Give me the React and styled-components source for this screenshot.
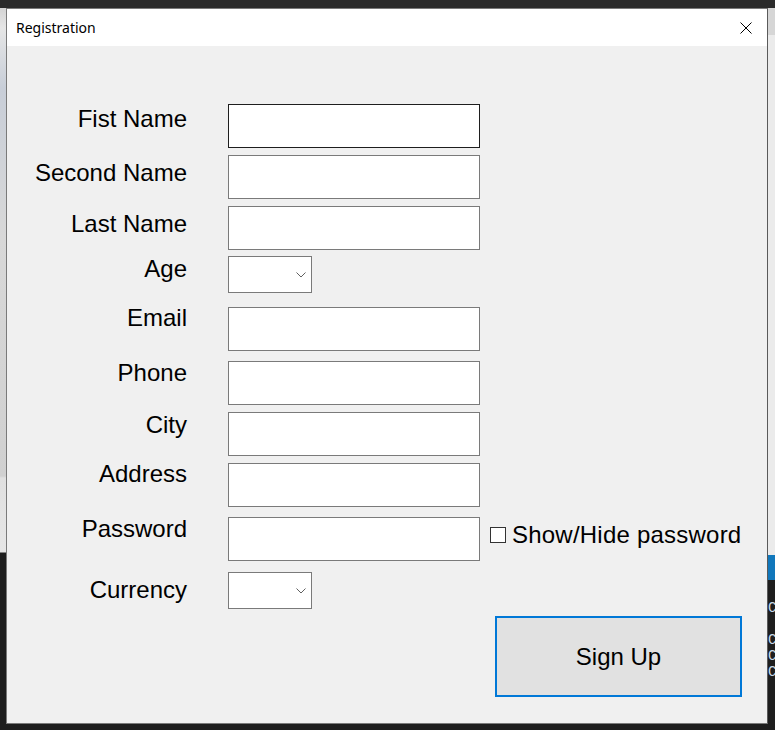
import React from 'react';
import styled, { createGlobalStyle } from 'styled-components';

const GlobalStyle = createGlobalStyle`
  html, body {
    margin: 0;
    padding: 0;
    background: #1e1e1e;
  }
  body {
    font-family: "Liberation Sans", Arial, sans-serif;
  }
`;

const Desktop = styled.div`
  width: 775px;
  height: 730px;
  overflow: hidden;
  display: grid;
  grid-template-columns: 6px 762px 7px;
  grid-template-rows: 8px 716px 6px;
  background: #1e1e1e;
`;

const TopStrip = styled.div`
  grid-column: 1 / 4;
  background: #2b2b2b;
`;

const BottomStrip = styled.div`
  grid-column: 1 / 4;
  background: #1e1e1e;
`;

const LeftStrip = styled.div`
  background: linear-gradient(
    to bottom,
    #d4d4d4 0,
    #e6e6e6 20px,
    #c8ced8 80px,
    #d8d8d8 230px,
    #d0d0d0 468px,
    #e0e0e0 470px,
    #e6e6e6 544px,
    #1e1e1e 545px
  );
`;

const RightStrip = styled.div`
  display: flex;
  flex-direction: column;
  overflow: hidden;
`;

const Band = styled.div`
  height: ${(p) => p.$h}px;
  background: ${(p) => p.$c};
  flex-shrink: 0;
`;

const CodeLines = styled.div`
  flex: 1;
  background: #1e1e1e;
  color: #c8d8e8;
  font-family: "Liberation Mono", monospace;
  font-size: 14px;
  line-height: 16px;
  padding-top: 20px;
  white-space: pre;
`;

const Window = styled.div`
  border: 1px solid #7a7a7a;
  border-right-color: #5a5a5a;
  display: flex;
  flex-direction: column;
  background: #f0f0f0;
  overflow: hidden;
`;

const TitleBar = styled.div`
  height: 37px;
  flex-shrink: 0;
  background: #ffffff;
  display: flex;
  align-items: center;
  justify-content: space-between;
  padding-left: 9px;
`;

const Title = styled.span`
  font-family: "Noto Sans", "Open Sans", sans-serif;
  font-size: 14px;
  color: #000;
`;

const CloseButton = styled.div`
  width: 43px;
  height: 37px;
  display: flex;
  align-items: center;
  justify-content: center;
`;

const Content = styled.div`
  flex: 1;
  display: flex;
  flex-direction: column;
  padding-top: 58px;
`;

const Row = styled.div`
  display: flex;
  align-items: flex-start;
  margin-top: ${(p) => p.$gap || 0}px;
`;

const Label = styled.div`
  width: 180px;
  flex-shrink: 0;
  text-align: right;
  font-size: 24px;
  line-height: 28px;
  color: #000;
  white-space: nowrap;
  margin-top: ${(p) => p.$shift || 0}px;
`;

const TextBox = styled.input`
  box-sizing: border-box;
  width: 252px;
  height: 44px;
  margin: 0 0 0 41px;
  padding: 0 4px;
  background: #fff;
  border: 1px solid ${(p) => (p.$active ? '#1e1e1e' : '#7a7a7a')};
  outline: none;
  font-family: "Liberation Sans", Arial, sans-serif;
  font-size: 24px;
`;

const Combo = styled.div`
  box-sizing: border-box;
  width: 84px;
  height: 37px;
  margin-left: 41px;
  background: #fff;
  border: 1px solid #7a7a7a;
  display: flex;
  align-items: center;
  justify-content: flex-end;
  padding-right: 5px;
`;

const CheckOption = styled.label`
  display: flex;
  align-items: center;
  height: 28px;
  margin: 4px 0 0 10px;
  font-size: 24px;
  letter-spacing: 0.22px;
  color: #000;
  white-space: nowrap;
`;

const CheckBox = styled.span`
  box-sizing: border-box;
  width: 16px;
  height: 16px;
  border: 1px solid #333;
  background: #fff;
  margin-right: 6px;
`;

const ButtonRow = styled.div`
  display: flex;
  margin-top: 7px;
  padding-left: 488px;
`;

const SignUpButton = styled.button`
  box-sizing: border-box;
  width: 247px;
  height: 81px;
  background: #e1e1e1;
  border: 2px solid #0078d7;
  font-family: "Liberation Sans", Arial, sans-serif;
  font-size: 24px;
  color: #000;
  padding: 0;
`;

const Chevron = () => (
  <svg width="10" height="6" viewBox="0 0 10 6">
    <path d="M0.5 0.5 L5 5 L9.5 0.5" fill="none" stroke="#606060" strokeWidth="1" />
  </svg>
);

const CloseIcon = () => (
  <svg width="12" height="12" viewBox="0 0 12 12">
    <path d="M0.5 0.5 L11.5 11.5 M11.5 0.5 L0.5 11.5" stroke="#000" strokeWidth="1" />
  </svg>
);

const fields = [
  { label: 'Fist Name', gap: 0, shift: 1, active: true },
  { label: 'Second Name', gap: 7, shift: 4 },
  { label: 'Last Name', gap: 7, shift: 4 },
  { label: 'Age', gap: 6, shift: -1, combo: true },
  { label: 'Email', gap: 14, shift: -3 },
  { label: 'Phone', gap: 10, shift: -2 },
  { label: 'City', gap: 7, shift: -1 },
  { label: 'Address', gap: 7, shift: -3 },
  { label: 'Password', gap: 10, shift: -2, check: true },
  { label: 'Currency', gap: 11, shift: 4, combo: true },
];

export default function App() {
  return (
    <>
      <GlobalStyle />
      <Desktop>
        <TopStrip />
        <LeftStrip />
        <Window>
          <TitleBar>
            <Title>Registration</Title>
            <CloseButton>
              <CloseIcon />
            </CloseButton>
          </TitleBar>
          <Content>
            {fields.map((f) => (
              <Row key={f.label} $gap={f.gap}>
                <Label $shift={f.shift}>{f.label}</Label>
                {f.combo ? (
                  <Combo>
                    <Chevron />
                  </Combo>
                ) : (
                  <TextBox $active={f.active} type={f.check ? 'password' : 'text'} />
                )}
                {f.check && (
                  <CheckOption>
                    <CheckBox />
                    Show/Hide password
                  </CheckOption>
                )}
              </Row>
            ))}
            <ButtonRow>
              <SignUpButton>Sign Up</SignUpButton>
            </ButtonRow>
          </Content>
        </Window>
        <RightStrip>
          <Band $h={27} $c="#d6d6d6" />
          <Band $h={520} $c="#ebebeb" />
          <Band $h={25} $c="#1177bb" />
          <CodeLines>{'C\n\nC\nC\nC'}</CodeLines>
        </RightStrip>
        <BottomStrip />
      </Desktop>
    </>
  );
}
